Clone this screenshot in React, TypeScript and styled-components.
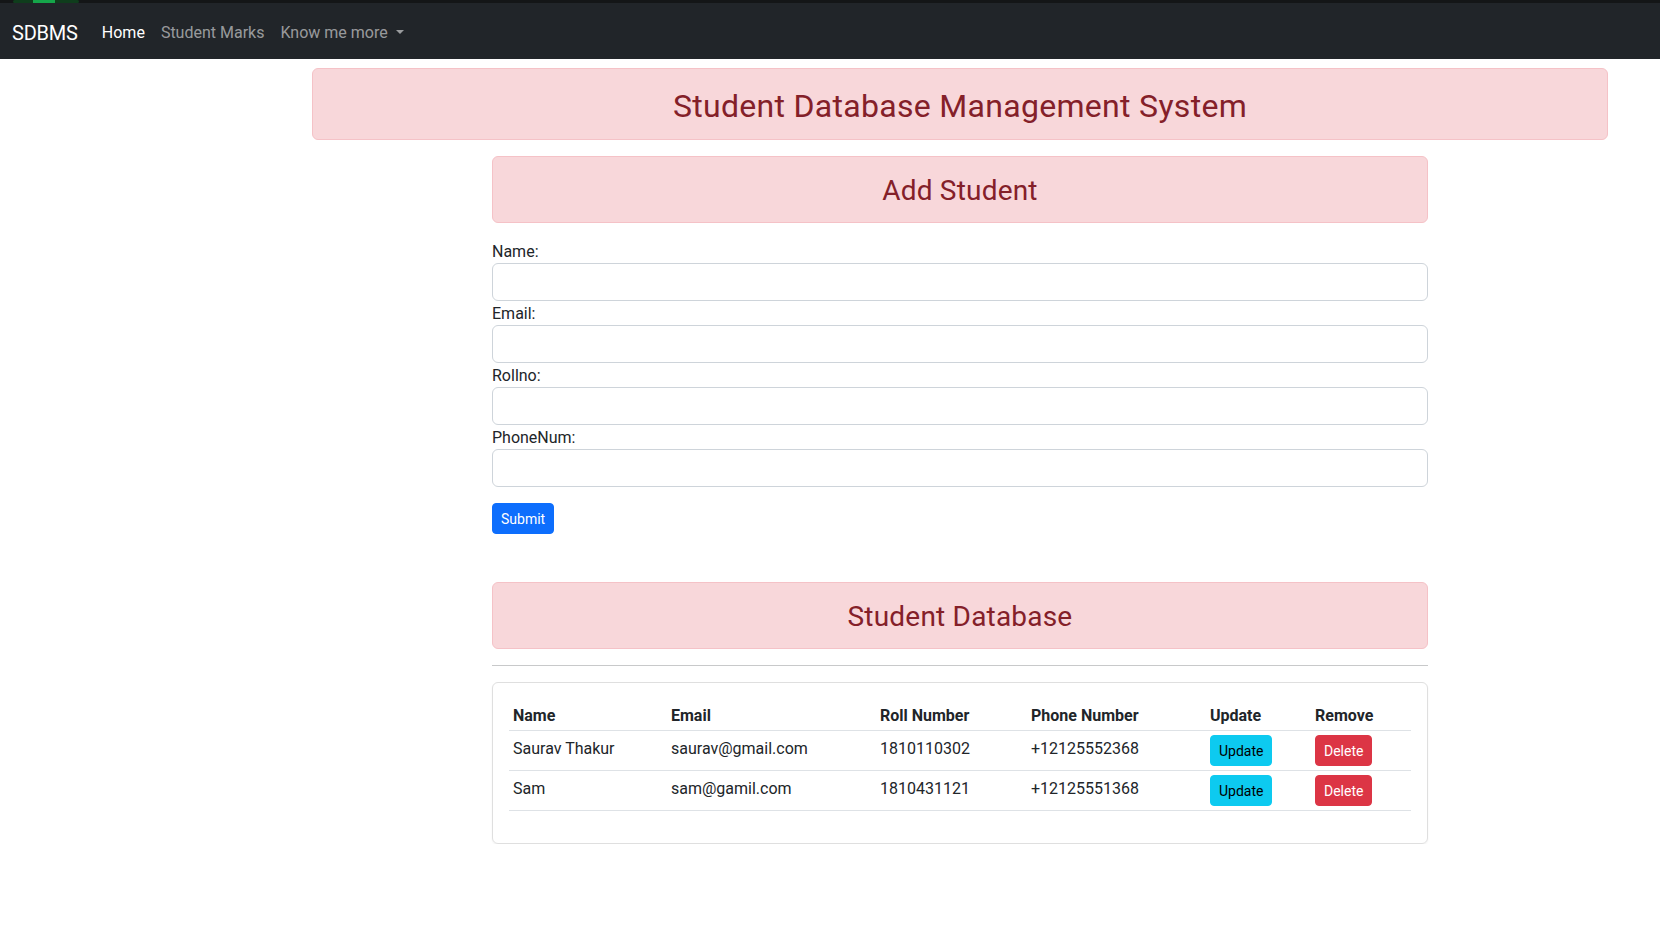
import React from "react";
import styled, { createGlobalStyle } from "styled-components";

const FONT = `Roboto, "Noto Sans", "Liberation Sans", sans-serif`;

const Global = createGlobalStyle`
  * { box-sizing: border-box; }
  html, body { margin: 0; padding: 0; }
  body {
    font-family: ${FONT};
    font-size: 16px;
    line-height: 1.5;
    color: #212529;
    background: #fff;
    overflow: hidden;
  }
`;

const TopStrip = styled.div`
  height: 3px;
  background: #141617;
  display: flex;
  align-items: flex-end;
  padding-left: 13px;
  overflow: hidden;
`;

const Navbar = styled.nav`
  height: 56px;
  background: #212529;
  display: flex;
  align-items: center;
  padding: 10px 12px 6px;
`;

const Brand = styled.a`
  font-size: 20px;
  line-height: 30px;
  padding: 5px 0;
  margin-right: 16px;
  color: #fff;
  text-decoration: none;
  white-space: nowrap;
  letter-spacing: -0.2px;
`;

const NavLink = styled.a<{ $active?: boolean }>`
  display: flex;
  align-items: center;
  font-size: 16px;
  line-height: 24px;
  padding: 8px;
  color: ${(p) => (p.$active ? "#fff" : "rgba(255,255,255,0.55)")};
  text-decoration: none;
  white-space: nowrap;
`;

const Caret = styled.span`
  display: inline-block;
  margin-left: 8px;
  margin-top: -2px;
  width: 0;
  height: 0;
  border-top: 4.8px solid rgba(255, 255, 255, 0.55);
  border-left: 4.8px solid transparent;
  border-right: 4.8px solid transparent;
`;

const Main = styled.main`
  margin: 9px 0 0 312px;
  width: 1296px;
`;

const Alert = styled.div`
  background: #f8d7da;
  border: 1px solid #f5c2c7;
  border-radius: 6px;
  padding: 18px 16px 14px;
  margin-bottom: 16px;
  color: #842029;
  text-align: center;
`;

const Title = styled.h2`
  margin: 0;
  font-size: 32px;
  line-height: 38.4px;
  font-weight: 400;
  letter-spacing: 0.3px;
`;

const SubTitle = styled.h3`
  margin: 0;
  font-size: 28px;
  line-height: 32.7px;
  font-weight: 400;
  letter-spacing: 0.2px;
`;

const Section = styled.section`
  width: 936px;
  margin: 0 auto;
`;

const Form = styled.form`
  display: flex;
  flex-direction: column;
  align-items: flex-start;
  margin-bottom: 48px;
`;

const Label = styled.label`
  display: block;
  font-size: 16px;
  line-height: 23px;
  padding-top: 1px;
`;

const Input = styled.input`
  display: block;
  width: 100%;
  height: 38px;
  padding: 6px 12px;
  font: inherit;
  color: #212529;
  border: 1px solid #ced4da;
  border-radius: 6px;
  background: #fff;
  outline: none;
`;

const Field = styled.div`
  width: 100%;
`;

const Button = styled.button<{ $variant: "primary" | "info" | "danger" }>`
  font-family: ${FONT};
  font-size: 14px;
  line-height: 21px;
  padding: 5px 8px 3px;
  border-radius: 4px;
  border: 1px solid
    ${(p) =>
      p.$variant === "primary" ? "#0d6efd" : p.$variant === "info" ? "#0dcaf0" : "#dc3545"};
  background: ${(p) =>
    p.$variant === "primary" ? "#0d6efd" : p.$variant === "info" ? "#0dcaf0" : "#dc3545"};
  color: ${(p) => (p.$variant === "info" ? "#000" : "#fff")};
  cursor: pointer;
`;

const SubmitButton = styled(Button)`
  margin-top: 16px;
`;

const Hr = styled.hr`
  margin: 16px 0;
  border: 0;
  border-top: 1px solid #c8c9ca;
`;

const Card = styled.div`
  border: 1px solid #dfdfdf;
  border-radius: 6px;
  padding: 16px;
  box-shadow: 0 1px 2px rgba(0, 0, 0, 0.06);
`;

const Table = styled.table`
  width: 100%;
  border-collapse: collapse;
  margin-bottom: 16px;
  vertical-align: top;
  table-layout: fixed;
`;

const Th = styled.th<{ $w: number }>`
  width: ${(p) => p.$w}px;
  text-align: left;
  font-weight: 700;
  padding: 5px 4px 2px;
  line-height: 24px;
  border-bottom: 1px solid #dee2e6;
`;

const Td = styled.td<{ $action?: boolean }>`
  padding: ${(p) => (p.$action ? "4px" : "6px 4px 2px")};
  line-height: 24px;
  border-bottom: 1px solid #dee2e6;
  vertical-align: top;
  white-space: nowrap;
`;

const cols: [string, number][] = [
  ["Name", 158],
  ["Email", 209],
  ["Roll Number", 151],
  ["Phone Number", 179],
  ["Update", 105],
  ["Remove", 100],
];

const students = [
  { name: "Saurav Thakur", email: "saurav@gmail.com", roll: "1810110302", phone: "+12125552368" },
  { name: "Sam", email: "sam@gamil.com", roll: "1810431121", phone: "+12125551368" },
];

const fields = ["Name:", "Email:", "Rollno:", "PhoneNum:"];

export default function App() {
  return (
    <>
      <Global />
      <TopStrip>
        <svg width="66" height="3" viewBox="0 0 66 3">
          <rect x="0" y="0" width="66" height="3" rx="1.5" fill="#0f3d1c" />
          <rect x="20" y="0" width="22" height="3" fill="#15a64a" />
        </svg>
      </TopStrip>
      <Navbar>
        <Brand href="#">SDBMS</Brand>
        <NavLink href="#" $active>
          Home
        </NavLink>
        <NavLink href="#">Student Marks</NavLink>
        <NavLink href="#">
          Know me more
          <Caret />
        </NavLink>
      </Navbar>
      <Main>
        <Alert>
          <Title>Student Database Management System</Title>
        </Alert>
        <Section>
          <Alert>
            <SubTitle>Add Student</SubTitle>
          </Alert>
          <Form onSubmit={(e) => e.preventDefault()}>
            {fields.map((f) => (
              <Field key={f}>
                <Label>{f}</Label>
                <Input type="text" />
              </Field>
            ))}
            <SubmitButton type="submit" $variant="primary">
              Submit
            </SubmitButton>
          </Form>
          <Alert>
            <SubTitle>Student Database</SubTitle>
          </Alert>
          <Hr />
          <Card>
            <Table>
              <thead>
                <tr>
                  {cols.map(([c, w]) => (
                    <Th key={c} $w={w}>
                      {c}
                    </Th>
                  ))}
                </tr>
              </thead>
              <tbody>
                {students.map((s) => (
                  <tr key={s.roll}>
                    <Td>{s.name}</Td>
                    <Td>{s.email}</Td>
                    <Td>{s.roll}</Td>
                    <Td>{s.phone}</Td>
                    <Td $action>
                      <Button $variant="info">Update</Button>
                    </Td>
                    <Td $action>
                      <Button $variant="danger">Delete</Button>
                    </Td>
                  </tr>
                ))}
              </tbody>
            </Table>
          </Card>
        </Section>
      </Main>
    </>
  );
}
